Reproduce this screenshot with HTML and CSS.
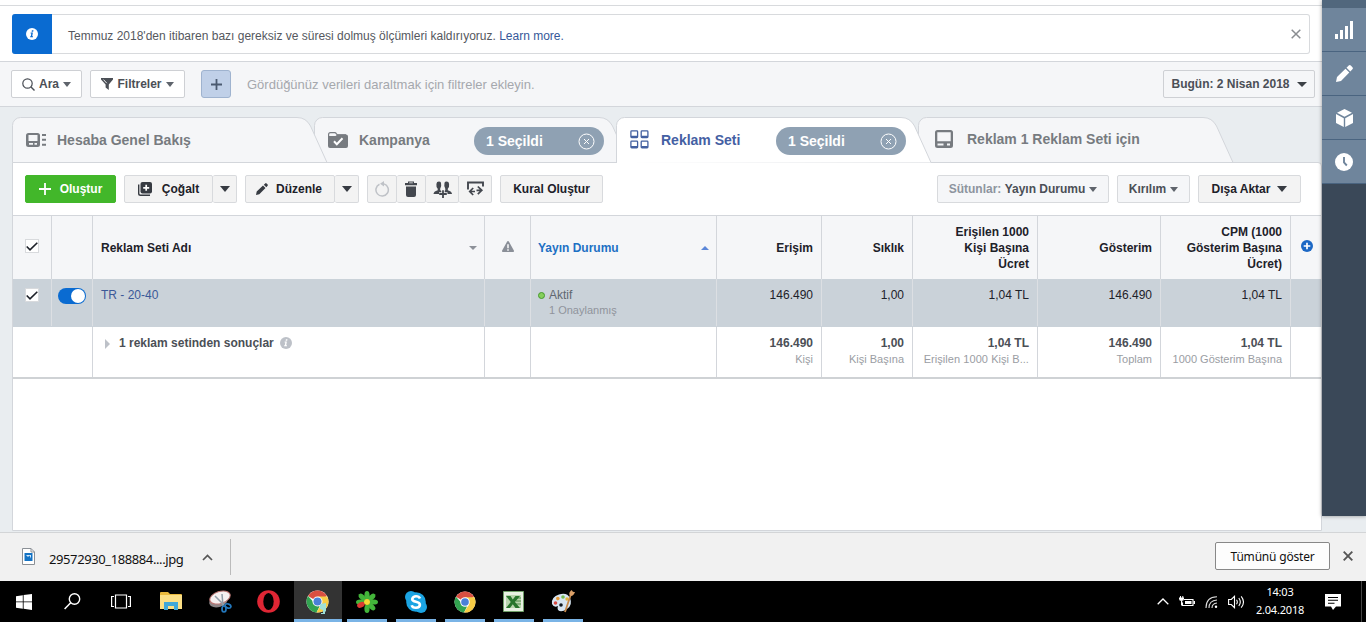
FILE: index.html
```html
<!DOCTYPE html>
<html lang="tr">
<head>
  <meta charset="UTF-8" />
  <meta name="viewport" content="width=device-width, initial-scale=1.0"/>
  <title>Reklam Yöneticisi</title>
  <link rel="stylesheet" href="styles.css">
</head>
<body>

  <div class="workspace">
    <main class="main">
      <div class="topline"></div>
      <div class="notice-area">
        <div class="notice">
          <div class="notice-icon">
            <svg width="12" height="12" viewBox="0 0 12 12"><circle cx="6" cy="6" r="6" fill="#fff"/><path d="M5.9 2.2h1.6l-.3 1.5H5.6zM4.7 4.6h2.2l-.7 3.7h.8v1H4.1l.1-1h.6l.5-2.7h-.7z" fill="#0a6bd1"/></svg>
          </div>
          <p class="notice-text">Temmuz 2018'den itibaren bazı gereksiz ve süresi dolmuş ölçümleri kaldırıyoruz. <a>Learn more.</a></p>
          <svg class="notice-close" width="10" height="10" viewBox="0 0 10 10"><path d="M.7.7l8.600 8.600M9.300.7L.7 9.300" stroke="#8a8d91" stroke-width="1.500"/></svg>
        </div>
      </div>

      <div class="filters">
        <button class="filter-btn search">
          <svg width="13" height="13" viewBox="0 0 13 13"><circle cx="5.500" cy="5.500" r="4.700" fill="none" stroke="#4b4f56" stroke-width="1.200"/><path d="M9 9l3.500 3.500" stroke="#4b4f56" stroke-width="1.400"/></svg>
          <span>Ara</span><i class="caret wide"></i>
        </button>
        <button class="filter-btn funnel">
          <svg width="12" height="12" viewBox="0 0 12 12"><path d="M0 0h12v1.500L7.800 6.500V12L4.600 9.500v-3L0 1.500z" fill="#4b4f56"/><path d="M2.500 1.600l3.300 3.600" stroke="#fff" stroke-width=".9"/></svg>
          <span>Filtreler</span><i class="caret wide"></i>
        </button>
        <button class="filter-add">
          <svg width="11" height="11" viewBox="0 0 11 11"><path d="M5.500 0v11M0 5.500h11" stroke="#4b5a70" stroke-width="1.800"/></svg>
        </button>
        <span class="filter-hint">Gördüğünüz verileri daraltmak için filtreler ekleyin.</span>
        <button class="filter-btn date"><span>Bugün: 2 Nisan 2018</span><i class="caret dark"></i></button>
      </div>

      <div class="board">
        <nav class="tabs">
          <div class="tab tab-account">
            <svg class="tab-shape" width="316" height="46" viewBox="0 0 316 46"><path d="M.5 45.500V8.500a8 8 0 0 1 8-8H285q9 0 13.500 8.500L315 45.500z"/></svg>
            <svg class="tab-icon" width="20" height="15" viewBox="0 0 20 15"><path d="M2.500 0h9A2.500 2.500 0 0 1 14 2.500v9a2.500 2.500 0 0 1-2.500 2.500h-9A2.500 2.500 0 0 1 0 11.500v-9A2.500 2.500 0 0 1 2.500 0zM2.500 2v6h9V2zM3 10v1.800h4V10zM8.500 10v1.800H11V10z" fill="#777b80" fill-rule="evenodd"/><path d="M16 2h4M16 6.800h4M16 11.700h4" stroke="#777b80" stroke-width="2"/></svg>
            <span class="tab-title">Hesaba Genel Bakış</span>
          </div>
          <div class="tab tab-campaign">
            <svg class="tab-shape" width="316" height="46" viewBox="0 0 316 46"><path d="M.5 45.500V8.500a8 8 0 0 1 8-8H285q9 0 13.500 8.500L315 45.500z"/></svg>
            <svg class="tab-icon" width="20" height="16" viewBox="0 0 20 16"><path d="M.6 5V2.500Q.6.600 2.500.600h4.200q1 0 1.800 1.200l.8 1H18" fill="none" stroke="#777b80" stroke-width="1.200"/><path d="M0 4h7.500l2-1.500H18q2 0 2 2V14q0 2-2 2H2q-2 0-2-2z" fill="#777b80"/><path d="M6 9.300l2.800 2.900 5.700-6" fill="none" stroke="#fff" stroke-width="2"/></svg>
            <span class="tab-title">Kampanya</span>
            <span class="pill">1 Seçildi <svg width="17" height="17" viewBox="0 0 17 17"><circle cx="8.500" cy="8.500" r="7.500"/><path d="M6 6l5 5M11 6l-5 5"/></svg></span>
          </div>
          <div class="tab tab-adset">
            <svg class="tab-shape" width="316" height="46" viewBox="0 0 316 46"><path d="M.5 46V8.500a8 8 0 0 1 8-8H285q9 0 13.500 8.500L315 45.500"/></svg>
            <svg class="tab-icon" width="19" height="19" viewBox="0 0 19 19"><g fill="none" stroke="#4360a0" stroke-width="1.300"><rect x=".9" y=".9" width="6.700" height="6.700" rx=".8"/><rect x="11.200" y=".9" width="6.700" height="6.700" rx=".8"/><rect x=".9" y="11.200" width="6.700" height="6.700" rx=".8"/><rect x="11.200" y="11.200" width="6.700" height="6.700" rx=".8"/></g><path d="M1 6.800h6.500M11.300 6.800h6.500M1 17.100h6.500M11.300 17.100h6.500" stroke="#4360a0" stroke-width="2"/></svg>
            <span class="tab-title">Reklam Seti</span>
            <span class="pill">1 Seçildi <svg width="17" height="17" viewBox="0 0 17 17"><circle cx="8.500" cy="8.500" r="7.500"/><path d="M6 6l5 5M11 6l-5 5"/></svg></span>
          </div>
          <div class="tab tab-ad">
            <svg class="tab-shape" width="316" height="46" viewBox="0 0 316 46"><path d="M.5 45.500V8.500a8 8 0 0 1 8-8H285q9 0 13.500 8.500L315 45.500z"/></svg>
            <svg class="tab-icon" width="18" height="18" viewBox="0 0 18 18"><path d="M2.500 0h13A2.500 2.500 0 0 1 18 2.500v13a2.500 2.500 0 0 1-2.500 2.500h-13A2.500 2.500 0 0 1 0 15.500v-13A2.500 2.500 0 0 1 2.500 0zM2.300 2.300v8.900h13.400V2.300zM2.500 13.500v2h6v-2zM12 13.500v2h3v-2z" fill="#777b80" fill-rule="evenodd"/></svg>
            <span class="tab-title">Reklam 1 Reklam Seti için</span>
          </div>
        </nav>

        <section class="panel">
          <div class="toolbar">
            <button class="btn create">
              <svg width="12" height="12" viewBox="0 0 12 12"><path d="M6 0v12M0 6h12" stroke="#fff" stroke-width="1.800"/></svg>
              <span>Oluştur</span>
            </button>
            <div class="group duplicate">
              <button class="btn">
                <svg width="14" height="14" viewBox="0 0 14 14"><path d="M.7 2.500v9q0 1.800 1.800 1.800H12" fill="none" stroke="#373b42" stroke-width="1.400"/><rect x="2.500" width="11.500" height="11.500" rx="2" fill="#373b42"/><path d="M8.200 2.800v6M5.200 5.800h6" stroke="#fff" stroke-width="1.700"/></svg>
                <span>Çoğalt</span>
              </button>
              <button class="btn drop"><i class="caret big"></i></button>
            </div>
            <div class="group edit">
              <button class="btn">
                <svg width="12" height="12" viewBox="0 0 12 12"><path d="M0 12l.7-3.500 6.300-6L9.500 5l-6.200 6.300zM7.800 1.700L9.200.400q.7-.6 1.400 0l1 1q.6.700 0 1.400l-1.300 1.400z" fill="#373b42"/></svg>
                <span>Düzenle</span>
              </button>
              <button class="btn drop"><i class="caret big"></i></button>
            </div>
            <div class="group icons">
              <button class="btn"><svg width="15" height="16" viewBox="0 0 15 16"><path d="M4.500 3.200A6.200 6.200 0 1 0 9 2.900" fill="none" stroke="#bfc2c7" stroke-width="1.500"/><path d="M5 2.800L9 0v5.600z" fill="#bfc2c7"/></svg></button>
              <button class="btn"><svg width="12" height="16" viewBox="0 0 12 16"><path d="M0 2h3V.5h6V2h3v2.200H0zM4.200 1.500v.7h3.600v-.7z" fill="#43474e" fill-rule="evenodd"/><path d="M1 5.500h10V14q0 2-2 2H3q-2 0-2-2z" fill="#43474e"/></svg></button>
              <button class="btn"><svg width="19" height="17" viewBox="0 0 19 17"><path d="M.5 13q0-2.500 4.200-3.800V7.800Q3 5.800 3.400 3 3.600.6 5.900.6q1.600 0 2.100 1.200.8 3.600-.8 6v1.500L9 10.200V13zM10.500 10.200l1.800-1V7.800q-1.600-2.400-.8-6Q12 .6 13.600.6q2.300 0 2.500 2.400.4 2.800-1.300 4.800v1.400q4.200 1.300 4.200 3.800h-8.500z" fill="#43474e"/><path d="M10 8.500V17M6 13h8.500" stroke="#f3f3f3" stroke-width="3.400"/><path d="M10 9.300V17M6.200 13h7.600" stroke="#43474e" stroke-width="1.800"/></svg></button>
              <button class="btn"><svg width="17" height="16" viewBox="0 0 17 16"><path d="M1 8.500V1.500h15V5.500" fill="none" stroke="#43474e" stroke-width="1.900"/><path d="M6.200 7L2.700 10.500 6.200 14M2.700 10.500H8M10.800 5.500L14.800 9.300l-4 3.800M14.800 9.300H9.500" fill="none" stroke="#43474e" stroke-width="1.700"/></svg></button>
            </div>
            <button class="btn rule">Kural Oluştur</button>
            <button class="btn pale columns"><span class="muted">Sütunlar:</span>&nbsp;<span>Yayın Durumu</span><i class="caret wide"></i></button>
            <button class="btn pale breakdown"><span>Kırılım</span><i class="caret wide"></i></button>
            <button class="btn export"><span>Dışa Aktar</span><i class="caret big"></i></button>
          </div>

          <div class="table">
            <div class="row head">
              <div class="cell check"><span class="checkbox"><svg width="12" height="9" viewBox="0 0 12 9"><path d="M.7 4.500L4 7.800 11.300.700" fill="none" stroke="#1d2129" stroke-width="1.600"/></svg></span></div>
              <div class="cell"></div>
              <div class="cell sortable"><span>Reklam Seti Adı</span><i class="caret small"></i></div>
              <div class="cell warn"><svg width="12" height="11" viewBox="0 0 12 11"><path d="M6 0q.7 0 1 .7l5 9q.3 1.300-.8 1.300H.8Q-.3 11 0 9.700l5-9Q5.300 0 6 0zM5.200 3.300v3.900h1.600V3.300zM5.200 8.200v1.500h1.600V8.200z" fill="#8a8f98" fill-rule="evenodd"/></svg></div>
              <div class="cell sortable sorted"><span>Yayın Durumu</span><i class="caret up"></i></div>
              <div class="cell num">Erişim</div>
              <div class="cell num">Sıklık</div>
              <div class="cell num">Erişilen 1000<br>Kişi Başına<br>Ücret</div>
              <div class="cell num">Gösterim</div>
              <div class="cell num">CPM (1000<br>Gösterim Başına<br>Ücret)</div>
              <div class="cell add"><svg width="12" height="12" viewBox="0 0 12 12"><circle cx="6" cy="6" r="6" fill="#1c68c5"/><path d="M6 2.700v6.600M2.700 6h6.600" stroke="#fff" stroke-width="1.700"/></svg></div>
            </div>
            <div class="row selected">
              <div class="cell check"><span class="checkbox"><svg width="12" height="9" viewBox="0 0 12 9"><path d="M.7 4.500L4 7.800 11.300.700" fill="none" stroke="#1d2129" stroke-width="1.600"/></svg></span></div>
              <div class="cell toggle-cell"><span class="toggle"></span></div>
              <div class="cell name"><a>TR - 20-40</a></div>
              <div class="cell"></div>
              <div class="cell status"><div><i class="dot"></i>Aktif</div><small>1 Onaylanmış</small></div>
              <div class="cell num">146.490</div>
              <div class="cell num">1,00</div>
              <div class="cell num">1,04 TL</div>
              <div class="cell num">146.490</div>
              <div class="cell num">1,04 TL</div>
              <div class="cell"></div>
            </div>
            <div class="row total">
              <div class="cell"></div>
              <div class="cell"></div>
              <div class="cell result"><i class="arrow"></i><b>1 reklam setinden sonuçlar</b><svg width="12" height="12" viewBox="0 0 12 12"><circle cx="6" cy="6" r="6" fill="#bdc1c8"/><path d="M5.900 2.200h1.600l-.3 1.500H5.600zM4.700 4.600h2.200l-.7 3.700h.8v1H4.100l.1-1h.6l.5-2.700h-.7z" fill="#fff"/></svg></div>
              <div class="cell"></div>
              <div class="cell"></div>
              <div class="cell num"><b>146.490</b><small>Kişi</small></div>
              <div class="cell num"><b>1,00</b><small>Kişi Başına</small></div>
              <div class="cell num"><b>1,04 TL</b><small class="clipped">Erişilen 1000 Kişi B...</small></div>
              <div class="cell num"><b>146.490</b><small>Toplam</small></div>
              <div class="cell num"><b>1,04 TL</b><small>1000 Gösterim Başına</small></div>
              <div class="cell"></div>
            </div>
          </div>
        </section>
      </div>
    </main>

    <aside class="sidebar">
      <button><svg width="19" height="18" viewBox="0 0 19 18"><path d="M0 13h3v5H0zM5 9h3v9H5zM10 5h3v13h-3zM15 0h3v18h-3z" fill="#fff"/></svg></button>
      <button><svg width="17" height="17" viewBox="0 0 17 17"><path d="M0 17l1-5L9.500 3.700l3.800 3.800L5 16zM10.500 2.700L12.700.600q1-1 2.100 0l1.600 1.600q1 1 0 2.100l-2.100 2.200z" fill="#fff"/></svg></button>
      <button><svg width="17" height="18" viewBox="0 0 17 18"><path d="M8.500 0l7.500 3.700-7.500 4L1 3.700zM0 5l7.800 4.200V18L0 14zM17 5L9.200 9.200V18L17 14z" fill="#fff"/></svg></button>
      <button><svg width="18" height="18" viewBox="0 0 18 18"><circle cx="9" cy="9" r="9" fill="#fff"/><path d="M9 4v5.500l2.800 3" fill="none" stroke="#6f859c" stroke-width="1.900"/></svg></button>
    </aside>
  </div>

  <div class="downloads">
    <svg class="file-icon" width="13" height="17" viewBox="0 0 13 17"><path d="M.5.500h8.500l3.500 3.500v12.500H.5z" fill="#fff" stroke="#8b9096"/><path d="M9 .5V4h3.500" fill="none" stroke="#8b9096"/><path d="M2.500 5h8v8h-8z" fill="#1473c4"/><path d="M4 7l2 2 1.500-1.500L9 10.500V7z" fill="#d5eafa"/></svg>
    <span class="file-name">29572930_188884....jpg</span>
    <svg class="chevron" width="11" height="7" viewBox="0 0 11 7"><path d="M1 6l4.500-4.500L10 6" fill="none" stroke="#555" stroke-width="1.700"/></svg>
    <span class="divider"></span>
    <button class="show-all">Tümünü göster</button>
    <svg class="close" width="10" height="10" viewBox="0 0 10 10"><path d="M.7.700l8.600 8.600M9.300.7L.7 9.300" stroke="#555" stroke-width="1.900"/></svg>
  </div>

  <footer class="taskbar">
    <div class="apps">
      <div class="app"><svg width="16" height="16" viewBox="0 0 16 16"><path d="M0 2.200L6.800 1.200v6.300H0zM7.600 1.100L16 0v7.500H7.600zM0 8.300h6.800v6.500L0 13.800zM7.600 8.300H16V16l-8.400-1.200z" fill="#fff"/></svg></div>
      <div class="app"><svg width="17" height="17" viewBox="0 0 17 17"><circle cx="10.500" cy="6" r="5.200" fill="none" stroke="#fff" stroke-width="1.400"/><path d="M6.700 9.800L.6 16" stroke="#fff" stroke-width="1.500"/></svg></div>
      <div class="app"><svg width="20" height="15" viewBox="0 0 20 15"><path d="M4.500 1h11v13h-11zM3 2.500H.6v10H3M17 2.500h2.400v10H17" fill="none" stroke="#fff" stroke-width="1.200"/></svg></div>
      <div class="app"><svg width="22" height="19" viewBox="0 0 22 19"><path d="M0 1q0-1 1-1h7l2 2h11q1 0 1 1v14H0z" fill="#e9b93c"/><path d="M0 3h22v14H0z" fill="#fbdf85"/><path d="M4 10h14v8h-4v-4H8v4H4z" fill="#3fa7d8"/></svg></div>
      <div class="app"><svg width="24" height="23" viewBox="0 0 24 23"><ellipse cx="10.500" cy="11" rx="9.500" ry="6" fill="#8d8587" transform="rotate(-18 10.500 11)"/><ellipse cx="12" cy="7.500" rx="10.500" ry="6" fill="#f5f0f0" stroke="#bf7774" transform="rotate(-18 12 7.500)"/><path d="M7 6l9 9M14 4l1 12" stroke="#919da7" stroke-width="1.500"/><ellipse cx="16" cy="19" rx="2" ry="3" fill="none" stroke="#2378bd" stroke-width="1.700"/><ellipse cx="20" cy="16" rx="3" ry="2" fill="none" stroke="#2378bd" stroke-width="1.700" transform="rotate(20 20 16)"/></svg></div>
      <div class="app"><svg width="23" height="23" viewBox="0 0 23 23"><circle cx="11.500" cy="11.500" r="11.300" fill="#df2634"/><ellipse cx="11.500" cy="11.500" rx="5.200" ry="8.600" fill="#000"/></svg></div>
      <div class="app active"><svg width="24" height="25" viewBox="0 0 24 25"><circle cx="11.500" cy="11.500" r="11" fill="#fff"/><path d="M11.500 11.500L2 6a11 11 0 0 1 19 0z" fill="#d94f41"/><path d="M11.500 11.500H7L2 6a11 11 0 0 0 8.500 16.500l3-6z" fill="#32a350"/><path d="M11.500 6.500H21.200A11 11 0 0 1 10.500 22.500l5-8.500z" fill="#f8cd46"/><circle cx="11.500" cy="11.500" r="5" fill="#fff"/><circle cx="11.500" cy="11.500" r="4" fill="#4a80d8"/><path d="M14 14l6-1v8l-1 1v2h-4v-1h2v-3l-3-1z" fill="#9fe0d8"/></svg></div>
      <div class="app open"><svg width="22" height="22" viewBox="0 0 22 22"><g fill="#43b53a"><ellipse cx="11" cy="4.300" rx="2.600" ry="4.300"/><ellipse cx="11" cy="4.300" rx="2.600" ry="4.300" transform="rotate(45 11 11)"/><ellipse cx="11" cy="4.300" rx="2.600" ry="4.300" transform="rotate(90 11 11)"/><ellipse cx="11" cy="4.300" rx="2.600" ry="4.300" transform="rotate(135 11 11)"/><ellipse cx="11" cy="4.300" rx="2.600" ry="4.300" transform="rotate(180 11 11)"/><ellipse cx="11" cy="4.300" rx="2.600" ry="4.300" transform="rotate(270 11 11)"/><ellipse cx="11" cy="4.300" rx="2.600" ry="4.300" transform="rotate(315 11 11)"/></g><ellipse cx="11" cy="4.300" rx="2.600" ry="4" fill="#dc3b32" transform="rotate(245 11 11)"/><circle cx="11" cy="11" r="3" fill="#f6d936"/></svg></div>
      <div class="app open"><svg width="22" height="22" viewBox="0 0 22 22"><circle cx="11" cy="11" r="9.800" fill="#1ba4e3"/><circle cx="6" cy="6" r="6" fill="#1ba4e3"/><circle cx="16" cy="16" r="6" fill="#1ba4e3"/><path d="M15 7.500Q14 5.300 11 5.300T7.200 8q0 2 3.800 2.800t3.900 3q-.2 2.900-3.900 2.900t-4.300-2.500" fill="none" stroke="#fff" stroke-width="2.600"/></svg></div>
      <div class="app open"><svg width="22" height="22" viewBox="0 0 23 23"><circle cx="11.500" cy="11.500" r="11" fill="#fff"/><path d="M11.500 11.500L2 6a11 11 0 0 1 19 0z" fill="#d94f41"/><path d="M11.500 11.500H7L2 6a11 11 0 0 0 8.500 16.500l3-6z" fill="#32a350"/><path d="M11.500 6.500H21.200A11 11 0 0 1 10.500 22.500l5-8.500z" fill="#f8cd46"/><circle cx="11.500" cy="11.500" r="5" fill="#fff"/><circle cx="11.500" cy="11.500" r="4" fill="#4a80d8"/></svg></div>
      <div class="app open"><svg width="21" height="21" viewBox="0 0 21 21"><path d="M.5.500h20v20H.5z" fill="#e8f1e3" stroke="#6f9f68"/><path d="M3 4h15v13H3z" fill="#b9d5ae"/><path d="M13 7h5M13 10h5M13 13h5" stroke="#518d48"/><path d="M3 5h4.500l2.300 3.500L12.500 5H17l-5 6 5 6h-4.500l-2.700-3.700L7 17H3l4.800-6z" fill="#28752d"/></svg></div>
      <div class="app open"><svg width="24" height="24" viewBox="0 0 24 24"><path d="M1 14Q0 7 8 4.500T19 8q3 7-3 11t-9 1q-1-2 0-4-4 2-6-2z" fill="#d7e5f2"/><circle cx="4.500" cy="13" r="1.800" fill="#d64942"/><circle cx="6.800" cy="8.600" r="1.800" fill="#e5993a"/><circle cx="12" cy="7" r="1.800" fill="#73b950"/><circle cx="16" cy="9" r="1.700" fill="#e3b33c"/><circle cx="10" cy="15" r="1.800" fill="#101820"/><path d="M20 4l-6 18" stroke="#c78a4b" stroke-width="1.800"/><path d="M18.300 4.500Q18 1.500 21 0q0 2 3 2-1.500 4-4 4z" fill="#dba068"/></svg></div>
    </div>
    <div class="tray">
      <svg width="12" height="7" viewBox="0 0 12 7"><path d="M.7 6.300L6 1l5.300 5.300" fill="none" stroke="#fff" stroke-width="1.300"/></svg>
      <svg width="16" height="11" viewBox="0 0 16 11"><path d="M5 3.500h9v6H3.500V6.500" fill="none" stroke="#fff" stroke-width="1.100"/><path d="M6 5h6.500v3H6zM14.500 5H16v3h-1.500zM0 1.500h5v1.300Q5 5 2.500 5T0 2.800zM1 0h1v2H1zM3.300 0h1v2h-1zM2 4.500h1.200V9.500H2z" fill="#fff"/></svg>
      <svg width="13" height="12" viewBox="0 0 13 12"><path d="M1 12Q1 1 12 .800M4 12Q4 4.500 12 4M7 12q0-4.500 5-5" fill="none" stroke="#ddd" stroke-width="1.100"/><circle cx="11" cy="10.800" r="1.200" fill="#fff"/></svg>
      <svg width="17" height="14" viewBox="0 0 17 14"><path d="M.6 4.500h2.700L6.500 1.300v11.400L3.300 9.500H.6zM8.500 4.700q1.600 2.300 0 4.600M10.800 3q3 4 0 8M13.200 1.300q4.600 5.700 0 11.400" fill="none" stroke="#fff" stroke-width="1.100"/></svg>
      <div class="clock"><span>14:03</span><span>2.04.2018</span></div>
      <svg width="16" height="16" viewBox="0 0 16 16"><path d="M0 0h16v12.500h-5L8 16l-2-3.500H0z" fill="#fff"/><path d="M3 3.500h10M3 6.300h10M3 9.200h6.500" stroke="#000" stroke-width="1.100"/></svg>
    </div>
  </footer>

</body>
</html>
```
FILE: styles.css
```css
* {
  box-sizing: border-box;
}

body {
  margin: 0;
  height: 622px;
  display: flex;
  flex-direction: column;
  overflow: hidden;
  font-family: "Liberation Sans", Arial, sans-serif;
  font-size: 12px;
  color: #1d2129;
  background: #e9edf0;
}

button {
  font: inherit;
  color: inherit;
  padding: 0;
  border: none;
  display: flex;
  align-items: center;
  justify-content: center;
  white-space: nowrap;
}

svg,
i {
  flex-shrink: 0;
}

.workspace {
  height: 533px;
  display: flex;
  border-bottom: 1px solid #d3d5d7;
}

.main {
  width: 1322px;
  display: flex;
  flex-direction: column;
}

/* notice */
.topline {
  height: 6px;
  background: #fff;
  border-bottom: 1px solid #d8dadd;
}

.notice-area {
  height: 56px;
  padding: 8px 12px 0;
  background: #fff;
  border-bottom: 1px solid #d3d6db;
}

.notice {
  height: 40px;
  display: flex;
  align-items: center;
  border: 1px solid #d8dadd;
  border-left: none;
  border-radius: 3px;
  padding-right: 8px;
}

.notice-icon {
  width: 40px;
  height: 40px;
  display: flex;
  align-items: center;
  justify-content: center;
  background: #0a6bd1;
  border-radius: 3px 0 0 3px;
}

.notice-text {
  margin: 3px auto 0 16px;
  color: #55585e;
}

.notice-text a {
  color: #365899;
}

/* filters */
.filters {
  height: 45px;
  display: flex;
  align-items: center;
  padding: 0 7px 0 11px;
  background: #f5f6f8;
  border-bottom: 1px solid #d3d6db;
}

.filter-btn {
  height: 28px;
  gap: 4px;
  border: 1px solid #ced0d4;
  border-radius: 2px;
  background: #fff;
  color: #4b4f56;
  font-weight: bold;
}

.search {
  width: 71px;
  margin-right: 8px;
}

.funnel {
  width: 95px;
  margin-right: 16px;
}

.filter-add {
  width: 30px;
  height: 28px;
  background: #c0d0e8;
  border: 1px solid #9fb3cf;
  border-radius: 3px;
}

.filter-hint {
  margin: 0 auto 0 16px;
  font-size: 13px;
  color: #a5a8ad;
}

.date {
  width: 152px;
  gap: 7px;
  background: #f5f6f8;
}

.caret {
  border: 4px solid transparent;
  border-top: 5px solid #5f646c;
  border-bottom: none;
}

.caret.wide {
  border-width: 5px 4.5px 0;
}

.caret.dark {
  border-width: 5px 5px 0;
  border-top-color: #3c4046;
}

.caret.big {
  border-width: 6px 5.5px 0;
  border-top-color: #373b42;
}

.caret.small {
  border-top: 4px solid #8d9199;
}

.caret.up {
  border-top: none;
  border-bottom: 4px solid #5b86d8;
}

/* tabs */
.board {
  flex: 1;
  display: flex;
  flex-direction: column;
  padding: 10px 0 0 12px;
}

.tabs {
  display: flex;
  height: 45px;
}

.tab {
  position: relative;
  width: 302px;
  height: 46px;
  display: flex;
  align-items: center;
  padding-left: 14px;
}

.tab > * {
  position: relative;
}

.tab-shape {
  position: absolute;
  top: 0;
  left: 0;
  fill: #f5f6f8;
  stroke: #d3d6db;
}

.tab-account {
  z-index: 2;
}

.tab-campaign {
  z-index: 1;
}

.tab-adset {
  z-index: 3;
}

.tab-adset .tab-shape {
  fill: #fff;
}

.tab-adset .tab-icon {
  margin-bottom: 2px;
}

.tab-title {
  margin-left: 11px;
  font-size: 14px;
  font-weight: bold;
  color: #777b80;
}

.tab-adset .tab-title {
  margin-left: 12px;
  color: #4460a3;
}

.tab-ad {
  padding: 0 0 3px 17px;
}

.tab-ad .tab-title {
  margin-left: 14px;
}

.pill {
  width: 130px;
  height: 28px;
  margin: 2px 12px 0 auto;
  padding: 0 9px 0 12px;
  display: flex;
  align-items: center;
  justify-content: space-between;
  border-radius: 14px;
  background: #8fa1b3;
  color: #fff;
  font-size: 14px;
  font-weight: bold;
}

.pill svg {
  fill: none;
  stroke: #fff;
}

/* panel */
.panel {
  height: 369px;
  background: #fff;
  border: 1px solid #d3d6db;
  border-radius: 0 4px 0 0;
}

.toolbar {
  height: 52px;
  padding: 12px 20px 0 12px;
  display: flex;
  align-items: flex-start;
  gap: 8px;
}

.btn {
  height: 28px;
  gap: 9px;
  background: #f3f3f3;
  border: 1px solid #d8dadd;
  border-radius: 2px;
  font-weight: bold;
}

.create {
  width: 91px;
  background: #42b72a;
  border-color: #42b72a;
  color: #fff;
}

.group {
  display: flex;
}

.group .btn {
  flex: 1;
}

.group .btn + .btn {
  border-left: none;
}

.group .drop {
  flex: 0 0 24px;
}

.duplicate {
  width: 113px;
}

.duplicate .btn {
  gap: 10px;
}

.edit {
  width: 114px;
}

.edit .btn {
  gap: 8px;
  padding-right: 2px;
}

.edit .drop {
  padding-right: 0;
}

.icons {
  width: 125px;
}

.icons .btn {
  flex: 0 0 29px;
}

.icons .btn:nth-child(1) {
  flex-basis: 30px;
}

.icons .btn:nth-child(n+3) {
  flex-basis: 33px;
}

.rule {
  width: 103px;
}

.pale {
  background: #f5f6f8;
  color: #4b4f56;
}

.muted {
  color: #8d949e;
}

.columns {
  width: 172px;
  margin-left: auto;
  gap: 0;
}

.columns .caret {
  margin-left: 4px;
}

.breakdown {
  width: 73px;
  gap: 4px;
}

.export {
  width: 103px;
  gap: 7px;
}

/* table */
.table {
  border-top: 1px solid #d3d6db;
  border-bottom: 2px solid #cfd2d5;
}

.row {
  display: grid;
  grid-template-columns: 39px 41px 392px 46px 186px 105px 91px 125px 123px 130px 1fr;
  line-height: 16px;
}

.cell {
  padding: 0 8px;
  border-right: 1px solid #d3d6db;
  white-space: nowrap;
}

.cell:last-child {
  border-right: none;
}

.head {
  height: 63px;
  background: #f5f6f8;
  font-weight: bold;
}

.head .cell {
  display: flex;
  align-items: center;
}

.num,
.head .num {
  text-align: right;
  justify-content: flex-end;
}

.head .sortable {
  justify-content: space-between;
  padding-right: 7px;
}

.head .sorted {
  color: #1d70c4;
}

.status,
.sorted {
  padding-left: 7px;
}

.head .warn,
.head .add {
  justify-content: center;
  padding: 0 0 3px;
}

.head .add {
  padding-left: 2px;
}

.check {
  padding: 0 12px;
}

.checkbox {
  width: 14px;
  height: 14px;
  display: flex;
  align-items: center;
  justify-content: center;
  background: #fff;
  border: 1px solid #d8dadd;
}

.head .check {
  padding-bottom: 3px;
}

.selected {
  height: 48px;
  padding-bottom: 1px;
  background: #cad2d9;
}

.selected .cell {
  padding-top: 8px;
  border-color: #dcdfe3;
}

.selected .check {
  padding-top: 9px;
}

.selected .toggle-cell {
  padding: 9px 0 0 6px;
}

.toggle {
  width: 28px;
  height: 16px;
  display: flex;
  justify-content: flex-end;
  padding: 1px;
  border-radius: 8px;
  background: #0a6bd1;
}

.toggle::after {
  content: "";
  width: 14px;
  height: 14px;
  border-radius: 50%;
  background: #fff;
}

.name a {
  color: #3b5998;
}

.status {
  color: #606770;
}

.status div {
  display: flex;
  align-items: center;
  gap: 4px;
}

.dot {
  width: 7px;
  height: 7px;
  border: 1px solid #45992d;
  border-radius: 50%;
  background: #86cf5c;
}

small {
  display: block;
  font-size: 11px;
  color: #90949c;
}

.status small {
  padding-left: 11px;
  margin-top: -1px;
}

.total {
  height: 50px;
}

.total .cell {
  padding-top: 8px;
  color: #4b4f56;
}

.total .cell:first-child {
  border-right-color: transparent;
}

.total .result {
  display: flex;
  align-items: flex-start;
  padding-left: 12px;
}

.result .arrow {
  margin: 4px 9px 0 0;
  border: 5px solid transparent;
  border-left: 5px solid #bdc1c8;
  border-right: none;
}

.result svg {
  margin: 2px 0 0 6px;
}

.total small {
  color: #9a9da3;
}

.clipped {
  letter-spacing: 0.06px;
}

/* right rail */
.sidebar {
  width: 44px;
  height: 516px;
  z-index: 4;
  background: #3a4858;
  border-top: 8px solid #51677d;
  box-shadow: 0 0 4px rgba(0, 0, 0, 0.4);
}

.sidebar button {
  width: 44px;
  height: 44px;
  background: #6f859c;
  border-bottom: 1px solid #4a6480;
}

/* download shelf */
.downloads {
  height: 48px;
  display: flex;
  align-items: center;
  padding: 0 13px 2px 22px;
  background: #f1f1f1;
  font-family: "Noto Sans", sans-serif;
  color: #111;
}

.file-name {
  width: 134px;
  margin: 6px 19px 0 14px;
  font-size: 13px;
  letter-spacing: -0.4px;
  white-space: nowrap;
}

.chevron {
  margin-top: 2px;
}

.divider {
  width: 1px;
  height: 36px;
  margin: 2px auto 0 17px;
  background: #bbb;
}

.show-all {
  width: 115px;
  height: 28px;
  margin-right: 13px;
  background: #fdfdfd;
  border: 1px solid #888;
  border-radius: 2px;
  letter-spacing: -0.2px;
}

/* windows taskbar */
.taskbar {
  height: 41px;
  display: flex;
  justify-content: space-between;
  background: #000;
  color: #fff;
}

.apps {
  display: grid;
  grid-template-columns: 48px 48px 50px repeat(9, 49px);
}

.app {
  display: flex;
  align-items: center;
  justify-content: center;
}

.active {
  margin-left: 1px;
  background: #333;
  border-bottom: 3px solid #7ab4e6;
  padding-top: 4px;
}

.open {
  background: linear-gradient(#7ab4e6, #7ab4e6) center bottom / 40px 3px no-repeat;
}

.tray {
  display: flex;
  align-items: center;
  gap: 10px;
  padding-right: 4px;
  margin-right: 4px;
  border-right: 1px solid #444;
}

.clock {
  width: 50px;
  margin: 0 2px 2px 0;
  display: flex;
  flex-direction: column;
  align-items: center;
  font-family: "Noto Sans", sans-serif;
  font-size: 11px;
  letter-spacing: -0.2px;
  line-height: 18px;
}

.tray .clock + svg {
  margin: 0 16px 0 8px;
}
```
